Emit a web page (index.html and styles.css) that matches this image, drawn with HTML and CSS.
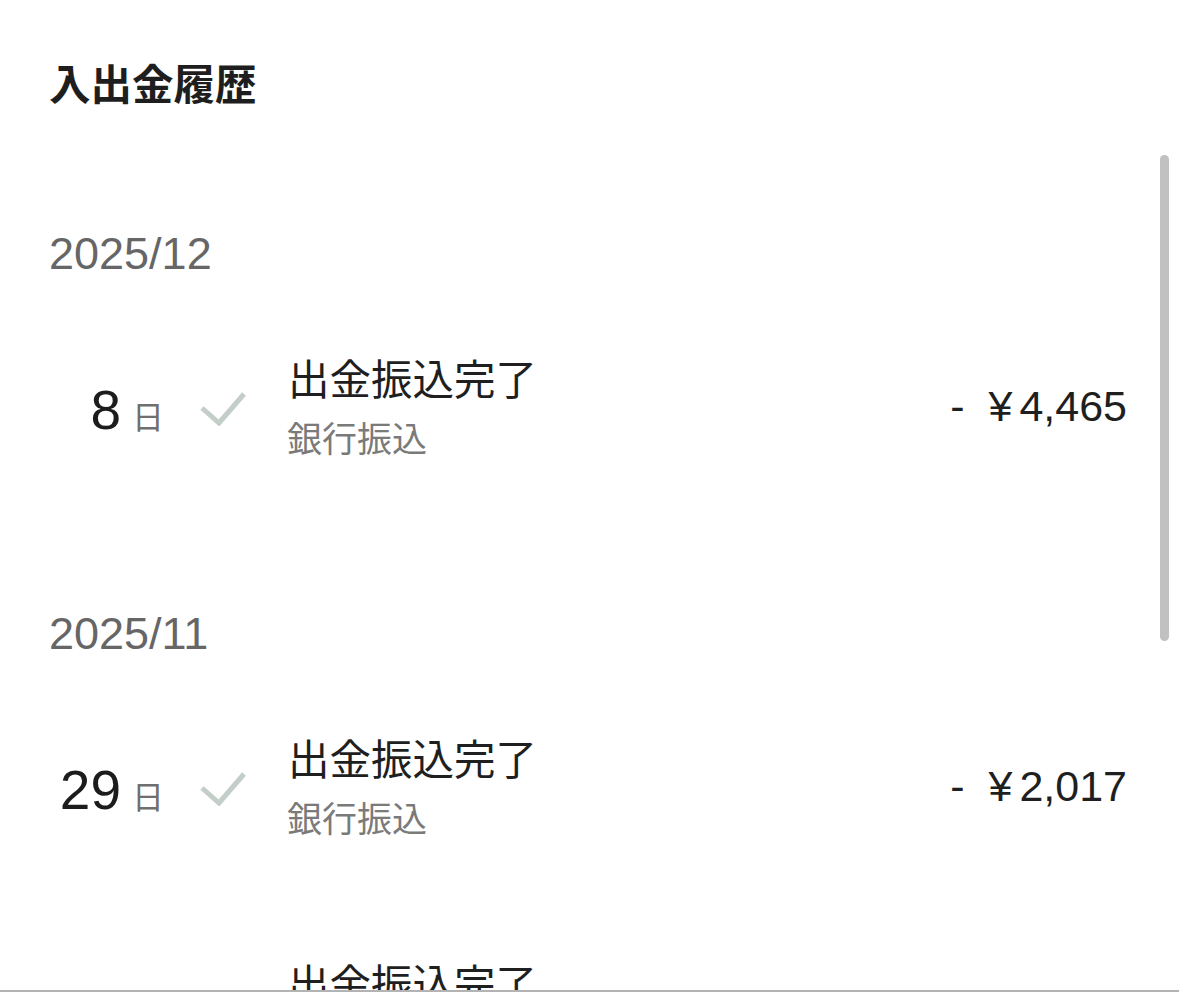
FILE: index.html
```html
<!DOCTYPE html>
<html lang="ja">
<head>
  <meta charset="UTF-8" />
  <meta name="viewport" content="width=device-width, initial-scale=1.0"/>
  <title>入出金履歴</title>
  <link rel="stylesheet" href="styles.css">
</head>
<body>

<div class="screen">
  <h1 class="page-title">入出金履歴</h1>

  <div class="history">
    <div class="month">2025/12</div>

    <div class="row">
      <div class="day"><span class="day-num">8</span><span class="day-unit">日</span></div>
      <svg class="check" width="50" height="36" viewBox="0 0 50 36">
        <polyline points="4,18 21,33 46,4" fill="none" stroke="#c4cec9" stroke-width="5" />
      </svg>
      <div class="info">
        <p class="info-title">出金振込完了</p>
        <p class="info-sub">銀行振込</p>
      </div>
      <div class="amount"><span class="sign">-</span><span class="yen">¥</span>4,465</div>
    </div>

    <div class="month">2025/11</div>

    <div class="row">
      <div class="day"><span class="day-num">29</span><span class="day-unit">日</span></div>
      <svg class="check" width="50" height="36" viewBox="0 0 50 36">
        <polyline points="4,18 21,33 46,4" fill="none" stroke="#c4cec9" stroke-width="5" />
      </svg>
      <div class="info">
        <p class="info-title">出金振込完了</p>
        <p class="info-sub">銀行振込</p>
      </div>
      <div class="amount"><span class="sign">-</span><span class="yen">¥</span>2,017</div>
    </div>

    <div class="row">
      <div class="day"><span class="day-num">17</span><span class="day-unit">日</span></div>
      <svg class="check" width="50" height="36" viewBox="0 0 50 36">
        <polyline points="4,18 21,33 46,4" fill="none" stroke="#c4cec9" stroke-width="5" />
      </svg>
      <div class="info">
        <p class="info-title">出金振込完了</p>
        <p class="info-sub">銀行振込</p>
      </div>
      <div class="amount"><span class="sign">-</span><span class="yen">¥</span>3,120</div>
    </div>
  </div>

  <div class="scrollbar"></div>
</div>

</body>
</html>
```

FILE: styles.css
```css
* {
  margin: 0; padding: 0; box-sizing: border-box;
  font-family: 'Liberation Sans', 'Noto Sans CJK JP', sans-serif;
}

body {
  background: #fff;
  color: #1f1f1f;
  overflow: hidden;
}

.screen {
  position: relative;
  height: 992px;
  overflow: hidden;
  border-bottom: 2px solid #b3b3b3;
}

.page-title {
  height: 142px;
  padding: 60px 0 0 49px;
  font-family: 'Noto Sans CJK JP', sans-serif;
  font-size: 41.5px;
  line-height: 44px;
  font-weight: bold;
  color: #1e1e1e;
}

.history {
  height: 848px;
  overflow: hidden;
}

.month {
  height: 155px;
  padding: 89px 0 0 49px;
  font-size: 45px;
  line-height: 46px;
  color: #666;
}

.row {
  height: 225px;
  display: flex;
  align-items: center;
  padding: 0 52px 0 50px;
}

.day {
  width: 150px;
  display: flex;
  align-items: baseline;
}

.day-num {
  width: 71px;
  text-align: right;
  font-size: 55px;
  color: #1c1c1c;
}

.day-unit {
  margin-left: 11px;
  font-family: 'Noto Sans CJK JP', sans-serif;
  font-size: 32px;
  color: #6f6f6f;
}

.check {
  margin-left: -2px;
  margin-top: -4px;
}

.info {
  flex: 1;
  margin-left: 40px;
}

.info-title {
  font-family: 'Noto Sans CJK JP', sans-serif;
  font-size: 41.5px;
  line-height: 54px;
  color: #1f1f1f;
}

.info-sub {
  margin-left: -1px;
  font-family: 'Noto Sans CJK JP', sans-serif;
  font-size: 35px;
  line-height: 66px;
  color: #7a7a7a;
}

.amount {
  font-size: 43px;
  color: #1f1f1f;
  margin-top: -6px;
}

.sign {
  margin-right: 24px;
}

.yen {
  margin-right: 7px;
}

.scrollbar {
  position: absolute;
  top: 155px;
  left: 1160px;
  width: 9px;
  height: 486px;
  border-radius: 5px;
  background: #c1c1c1;
}
```
